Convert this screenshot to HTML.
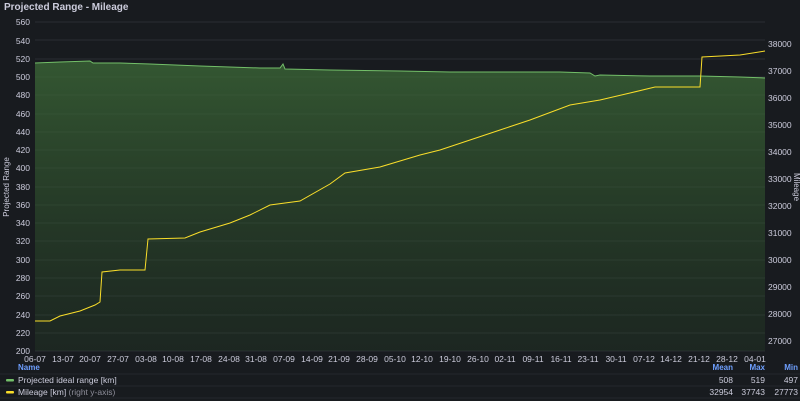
<!DOCTYPE html>
<html><head><style>
body{margin:0;width:800px;height:401px;background:#181b1f;font-family:"Liberation Sans",sans-serif;overflow:hidden;position:relative;color:#ccccdc}
.t{position:absolute;left:4px;top:2px;font-size:10px;font-weight:bold;color:#ccccdc}
</style></head><body>
<div class="t">Projected Range - Mileage</div>
<svg width="800" height="401" style="position:absolute;left:0;top:0" font-family="Liberation Sans" font-size="8.5" fill="#ccccdc">
<defs><linearGradient id="g" x1="0" y1="0" x2="0" y2="1"><stop offset="0" stop-color="#3d6b38" stop-opacity=".75"/><stop offset="1" stop-color="#2a4a28" stop-opacity=".25"/></linearGradient></defs>
<g stroke="#2a2d33" stroke-width="1">
<line x1="35" y1="22" x2="765" y2="22"/><line x1="35" y1="40" x2="765" y2="40"/><line x1="35" y1="59" x2="765" y2="59"/><line x1="35" y1="77" x2="765" y2="77"/><line x1="35" y1="95" x2="765" y2="95"/><line x1="35" y1="114" x2="765" y2="114"/><line x1="35" y1="132" x2="765" y2="132"/><line x1="35" y1="150" x2="765" y2="150"/><line x1="35" y1="168" x2="765" y2="168"/><line x1="35" y1="187" x2="765" y2="187"/><line x1="35" y1="205" x2="765" y2="205"/><line x1="35" y1="223" x2="765" y2="223"/><line x1="35" y1="241" x2="765" y2="241"/><line x1="35" y1="260" x2="765" y2="260"/><line x1="35" y1="278" x2="765" y2="278"/><line x1="35" y1="296" x2="765" y2="296"/><line x1="35" y1="315" x2="765" y2="315"/><line x1="35" y1="333" x2="765" y2="333"/><line x1="35" y1="351" x2="765" y2="351"/>
</g>
<path d="M35 63 L60 62 L90 61 L93 63 L120 63 L150 64 L200 66 L260 68 L280 68 L283 64 L285 69 L330 70 L400 71 L450 72 L500 72 L560 72 L590 73 L595 76 L600 75 L650 76 L700 76 L740 77 L765 78 L765 351 L35 351Z" fill="url(#g)"/>
<path d="M35 63 L60 62 L90 61 L93 63 L120 63 L150 64 L200 66 L260 68 L280 68 L283 64 L285 69 L330 70 L400 71 L450 72 L500 72 L560 72 L590 73 L595 76 L600 75 L650 76 L700 76 L740 77 L765 78" fill="none" stroke="#73bf69" stroke-width="1"/>
<path d="M35 321 L50 321 L60 316 L80 311 L95 305 L100 302 L102 272 L120 270 L145 270 L148 239 L185 238 L200 232 L230 223 L250 215 L270 205 L300 201 L330 184 L345 173 L380 167 L400 161 L420 155 L440 150 L470 140 L500 130 L530 120 L570 105 L600 100 L630 93 L655 87 L700 87 L702 57 L740 55 L765 51" fill="none" stroke="#fade2a" stroke-width="1"/>
<g text-anchor="end">
<text x="30" y="25">560</text><text x="30" y="44">540</text><text x="30" y="62">520</text><text x="30" y="80">500</text><text x="30" y="98">480</text><text x="30" y="117">460</text><text x="30" y="135">440</text><text x="30" y="153">420</text><text x="30" y="171">400</text><text x="30" y="190">380</text><text x="30" y="208">360</text><text x="30" y="226">340</text><text x="30" y="244">320</text><text x="30" y="263">300</text><text x="30" y="281">280</text><text x="30" y="299">260</text><text x="30" y="318">240</text><text x="30" y="336">220</text><text x="30" y="354">200</text>
</g>
<g>
<text x="768" y="47">38000</text><text x="768" y="74">37000</text><text x="768" y="101">36000</text><text x="768" y="128">35000</text><text x="768" y="155">34000</text><text x="768" y="182">33000</text><text x="768" y="209">32000</text><text x="768" y="236">31000</text><text x="768" y="263">30000</text><text x="768" y="290">29000</text><text x="768" y="317">28000</text><text x="768" y="344">27000</text>
</g>
<text transform="translate(9 187) rotate(-90)" text-anchor="middle" font-size="8">Projected Range</text>
<text transform="translate(794 187) rotate(90)" text-anchor="middle" font-size="8">Mileage</text>
<g text-anchor="middle">
<text x="35" y="362">06-07</text><text x="63" y="362">13-07</text><text x="90" y="362">20-07</text><text x="118" y="362">27-07</text><text x="146" y="362">03-08</text><text x="173" y="362">10-08</text><text x="201" y="362">17-08</text><text x="229" y="362">24-08</text><text x="256" y="362">31-08</text><text x="284" y="362">07-09</text><text x="312" y="362">14-09</text><text x="339" y="362">21-09</text><text x="367" y="362">28-09</text><text x="395" y="362">05-10</text><text x="422" y="362">12-10</text><text x="450" y="362">19-10</text><text x="478" y="362">26-10</text><text x="505" y="362">02-11</text><text x="533" y="362">09-11</text><text x="561" y="362">16-11</text><text x="588" y="362">23-11</text><text x="616" y="362">30-11</text><text x="644" y="362">07-12</text><text x="671" y="362">14-12</text><text x="699" y="362">21-12</text><text x="727" y="362">28-12</text><text x="755" y="362">04-01</text>
</g>
<g fill="#6e9fff" font-weight="bold" font-size="8">
<text x="18" y="370">Name</text><text x="733" y="370" text-anchor="end">Mean</text><text x="765" y="370" text-anchor="end">Max</text><text x="798" y="370" text-anchor="end">Min</text>
</g>
<line x1="0" y1="374" x2="800" y2="374" stroke="#24272c"/>
<line x1="0" y1="386" x2="800" y2="386" stroke="#24272c"/>
<line x1="0" y1="398" x2="800" y2="398" stroke="#24272c"/>
<rect x="6" y="379" width="8" height="2.5" rx="1" fill="#73bf69"/>
<rect x="6" y="391" width="8" height="2.5" rx="1" fill="#fade2a"/>
<text x="18" y="383">Projected ideal range [km]</text>
<text x="18" y="395">Mileage [km] <tspan fill="#8e8e9a">(right y-axis)</tspan></text>
<g text-anchor="end">
<text x="733" y="383">508</text><text x="765" y="383">519</text><text x="798" y="383">497</text>
<text x="733" y="395">32954</text><text x="765" y="395">37743</text><text x="798" y="395">27773</text>
</g>
</svg>
</body></html>
